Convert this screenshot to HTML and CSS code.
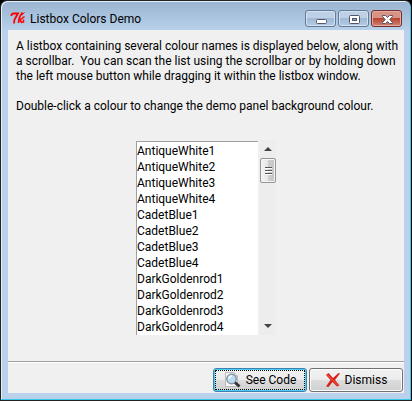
FILE: index.html
```html
<!DOCTYPE html>
<html lang="en">
<head>
<meta charset="utf-8">
<title>Listbox Colors Demo</title>
<link rel="stylesheet" href="styles.css">
</head>
<body>
<main class="window">
  <header class="titlebar">
    <svg class="logo" width="16" height="16" viewBox="0 0 16 16" fill="none" stroke="#f00" stroke-width="1.800" aria-hidden="true">
      <path d="M1.500 6V4.500L3 3.500H8L6 7L4.500 9.500L4 13.500"/>
      <path stroke-width="1.700" d="M12.500 2.500L10.500 5.500L9 9L8.500 13"/>
      <path stroke-width="1.500" d="M14.500 6.500L10 10L11.500 12.500L13.500 12V9.500"/>
      <path stroke-width="1" d="M14.500 2.500L12 5"/>
    </svg>
    <h1 class="title">Listbox Colors Demo</h1>
    <div class="controls">
      <button class="control" type="button" aria-label="Minimize">
        <svg width="14" height="12" viewBox="0 0 14 12"><rect x="2.500" y="6.500" width="10" height="4" rx="1" fill="#fff" stroke="#535666"/></svg>
      </button>
      <button class="control" type="button" aria-label="Maximize">
        <svg width="14" height="12" viewBox="0 0 14 12"><rect x="2.500" y="2.500" width="10" height="8" rx="1" fill="#fff" stroke="#535666"/><rect x="5.500" y="5.500" width="4" height="2" fill="#8ba9cc" stroke="#535666"/></svg>
      </button>
      <button class="control control-close" type="button" aria-label="Close">
        <svg width="14" height="12" viewBox="0 0 14 12"><path d="M2.500 2.500H5.500L7.500 4.500L9.500 2.500H12.500V3.500L9.800 6.500L12.500 9.500V10.500H9.500L7.500 8.500L5.500 10.500H2.500V9.500L5.200 6.500L2.500 3.500Z" fill="#fff" stroke="#535666"/></svg>
      </button>
    </div>
  </header>
  <div class="client">
    <div class="intro" id="intro">
      <p>A listbox containing several colour names is displayed below, along with
a scrollbar.  You can scan the list using the scrollbar or by holding down
the left mouse button while dragging it within the listbox window.</p>
      <p>Double-click a colour to change the demo panel background colour.</p>
    </div>
    <div class="panel">
      <select class="listbox" size="12" aria-labelledby="intro">
        <option>AntiqueWhite1</option>
        <option>AntiqueWhite2</option>
        <option>AntiqueWhite3</option>
        <option>AntiqueWhite4</option>
        <option>CadetBlue1</option>
        <option>CadetBlue2</option>
        <option>CadetBlue3</option>
        <option>CadetBlue4</option>
        <option>DarkGoldenrod1</option>
        <option>DarkGoldenrod2</option>
        <option>DarkGoldenrod3</option>
        <option>DarkGoldenrod4</option>
      </select>
      <div class="scrollbar">
        <button class="arrow" type="button" aria-label="Scroll up"><svg width="8" height="4" viewBox="0 0 8 4"><path d="M0 4L4 0L8 4Z" fill="#444"/></svg></button>
        <button class="thumb" type="button" aria-label="Scroll position"><svg width="7" height="9" viewBox="0 0 7 9"><path d="M0 1.500H7M0 4.500H7M0 7.500H7" stroke="#555"/><path d="M0 2.500H7M0 5.500H7M0 8.500H7" stroke="#fff"/></svg></button>
        <button class="arrow arrow-down" type="button" aria-label="Scroll down"><svg width="8" height="4" viewBox="0 0 8 4"><path d="M0 0L4 4L8 0Z" fill="#444"/></svg></button>
      </div>
    </div>
    <footer class="actions">
      <button class="action action-default" type="button">
        <svg width="18" height="16" viewBox="0 0 18 16" aria-hidden="true">
          <path d="M1.500 .5H10L13.500 4V14.500H1.500Z" fill="#f5f5f5" stroke="#bbb"/>
          <path d="M10 .5V4H13.500" fill="#ddd" stroke="#aaa"/>
          <circle cx="7.500" cy="7" r="4.700" fill="#b8dcf2" stroke="#8796a2" stroke-width="1.500"/>
          <path d="M5 7A3 3 0 0 1 8 4" fill="none" stroke="#fff" stroke-width="1.500"/>
          <path d="M11 10.500L15.500 14.500" stroke="#333" stroke-width="3"/>
        </svg>
        <span>See Code</span>
      </button>
      <button class="action" type="button">
        <svg width="16" height="16" viewBox="0 0 16 16" aria-hidden="true">
          <path d="M1 3L3.500 1L8 6L13.500 1L15 1.500L10 8L14.500 13.500L12 14.500L7.500 10L3.500 15L1 14.500L5.500 8Z" fill="#db2018"/>
          <path d="M2.500 3L13 13.500" stroke="#f26a58"/>
        </svg>
        <span>Dismiss</span>
      </button>
    </footer>
  </div>
</main>
</body>
</html>
```
FILE: styles.css
```css
* { box-sizing: border-box; }

body {
  margin: 0;
  background: #000;
  color: #000;
  font: 12px/15px Roboto, "Open Sans", sans-serif;
}

button { font: inherit; color: inherit; padding: 0; }
svg { display: block; flex: none; }
p { margin: 0; }

.window {
  display: flex;
  flex-direction: column;
  min-height: 100vh;
  padding: 0 7px 7px;
  border: 1px solid #222;
  border-right-color: #000;
  border-radius: 7px 7px 0 0;
  background: linear-gradient(#99b4d1, #b9d1ea 30px);
  box-shadow: inset -1px -1px #35c8e8, inset 1px 1px #e4f0fa;
}

.titlebar {
  display: flex;
  align-items: flex-start;
  height: 29px;
  padding-left: 2px;
}

.logo { margin-top: 9px; }

.title {
  flex: 1;
  margin: 10px 0 0 4px;
  font-size: 12px;
  font-weight: 400;
  line-height: 16px;
  white-space: nowrap;
}

.controls {
  display: flex;
  gap: 2px;
  margin: 9px 2px 0 0;
}

.control {
  display: flex;
  align-items: center;
  justify-content: center;
  width: 31px;
  height: 17px;
  border: 1px solid #627b98;
  border-radius: 3px;
  background: linear-gradient(#bdd0e5 50%, #9fb9d6 50%, #b5cbe3);
  box-shadow: inset 0 0 0 1px #d3e1f0;
}

.control-close {
  border-color: #722f2d;
  background: linear-gradient(#d99385 50%, #b84430 50%, #d08572);
  box-shadow: inset 0 0 0 1px #e3aca2;
}

.client {
  flex: 1;
  display: flex;
  flex-direction: column;
  background: #f0f0f0;
}

.intro {
  display: grid;
  gap: 15px;
  padding: 9px 8px 0;
  white-space: pre;
}

.panel {
  flex: 1;
  display: flex;
  align-items: center;
  justify-content: center;
  gap: 2px;
}

.listbox {
  width: 122px;
  height: 194px;
  padding: 1px 0 0;
  border: solid;
  border-width: 1px 0 0 1px;
  border-color: #a0a0a0;
  border-radius: 0;
  outline: 0;
  background: #fff;
  color: #000;
  font: inherit;
  overflow: hidden;
  scrollbar-width: none;
}

.listbox option {
  height: 16px;
  min-height: 16px;
  padding: 1px 0 0;
  line-height: 15px;
}

.scrollbar {
  display: flex;
  flex-direction: column;
  width: 16px;
  height: 195px;
  background: #ededed;
}

.arrow {
  display: flex;
  align-items: center;
  justify-content: center;
  height: 18px;
  border: 0;
  background: none;
}

.arrow-down { margin-top: auto; }

.thumb {
  display: flex;
  align-items: center;
  justify-content: center;
  height: 25px;
  border: 1px solid #959595;
  border-radius: 2px;
  background: linear-gradient(90deg, #f5f5f5, #e5e5e5 50%, #cfcfcf 50%, #c4c4c8);
  box-shadow: inset 0 0 0 1px #f5f5f5;
}

.actions {
  display: flex;
  justify-content: flex-end;
  gap: 2px;
  padding: 6px 1px 1px;
  border-top: 1px solid #a0a0a0;
  box-shadow: inset 0 1px #fff;
}

.action {
  display: flex;
  align-items: center;
  justify-content: center;
  gap: 4px;
  width: 94px;
  height: 24px;
  border: 1px solid #707070;
  border-radius: 3px;
  background: linear-gradient(#f2f2f2, #ebebeb 50%, #ddd 50%, #cfcfcf);
  box-shadow: inset 0 0 0 1px #fcfcfc;
}

.action-default {
  border-color: #3c7fb1;
  box-shadow: inset 0 0 0 1px #48d1f5;
  outline: 1px dotted #000;
  outline-offset: -3px;
}
```
